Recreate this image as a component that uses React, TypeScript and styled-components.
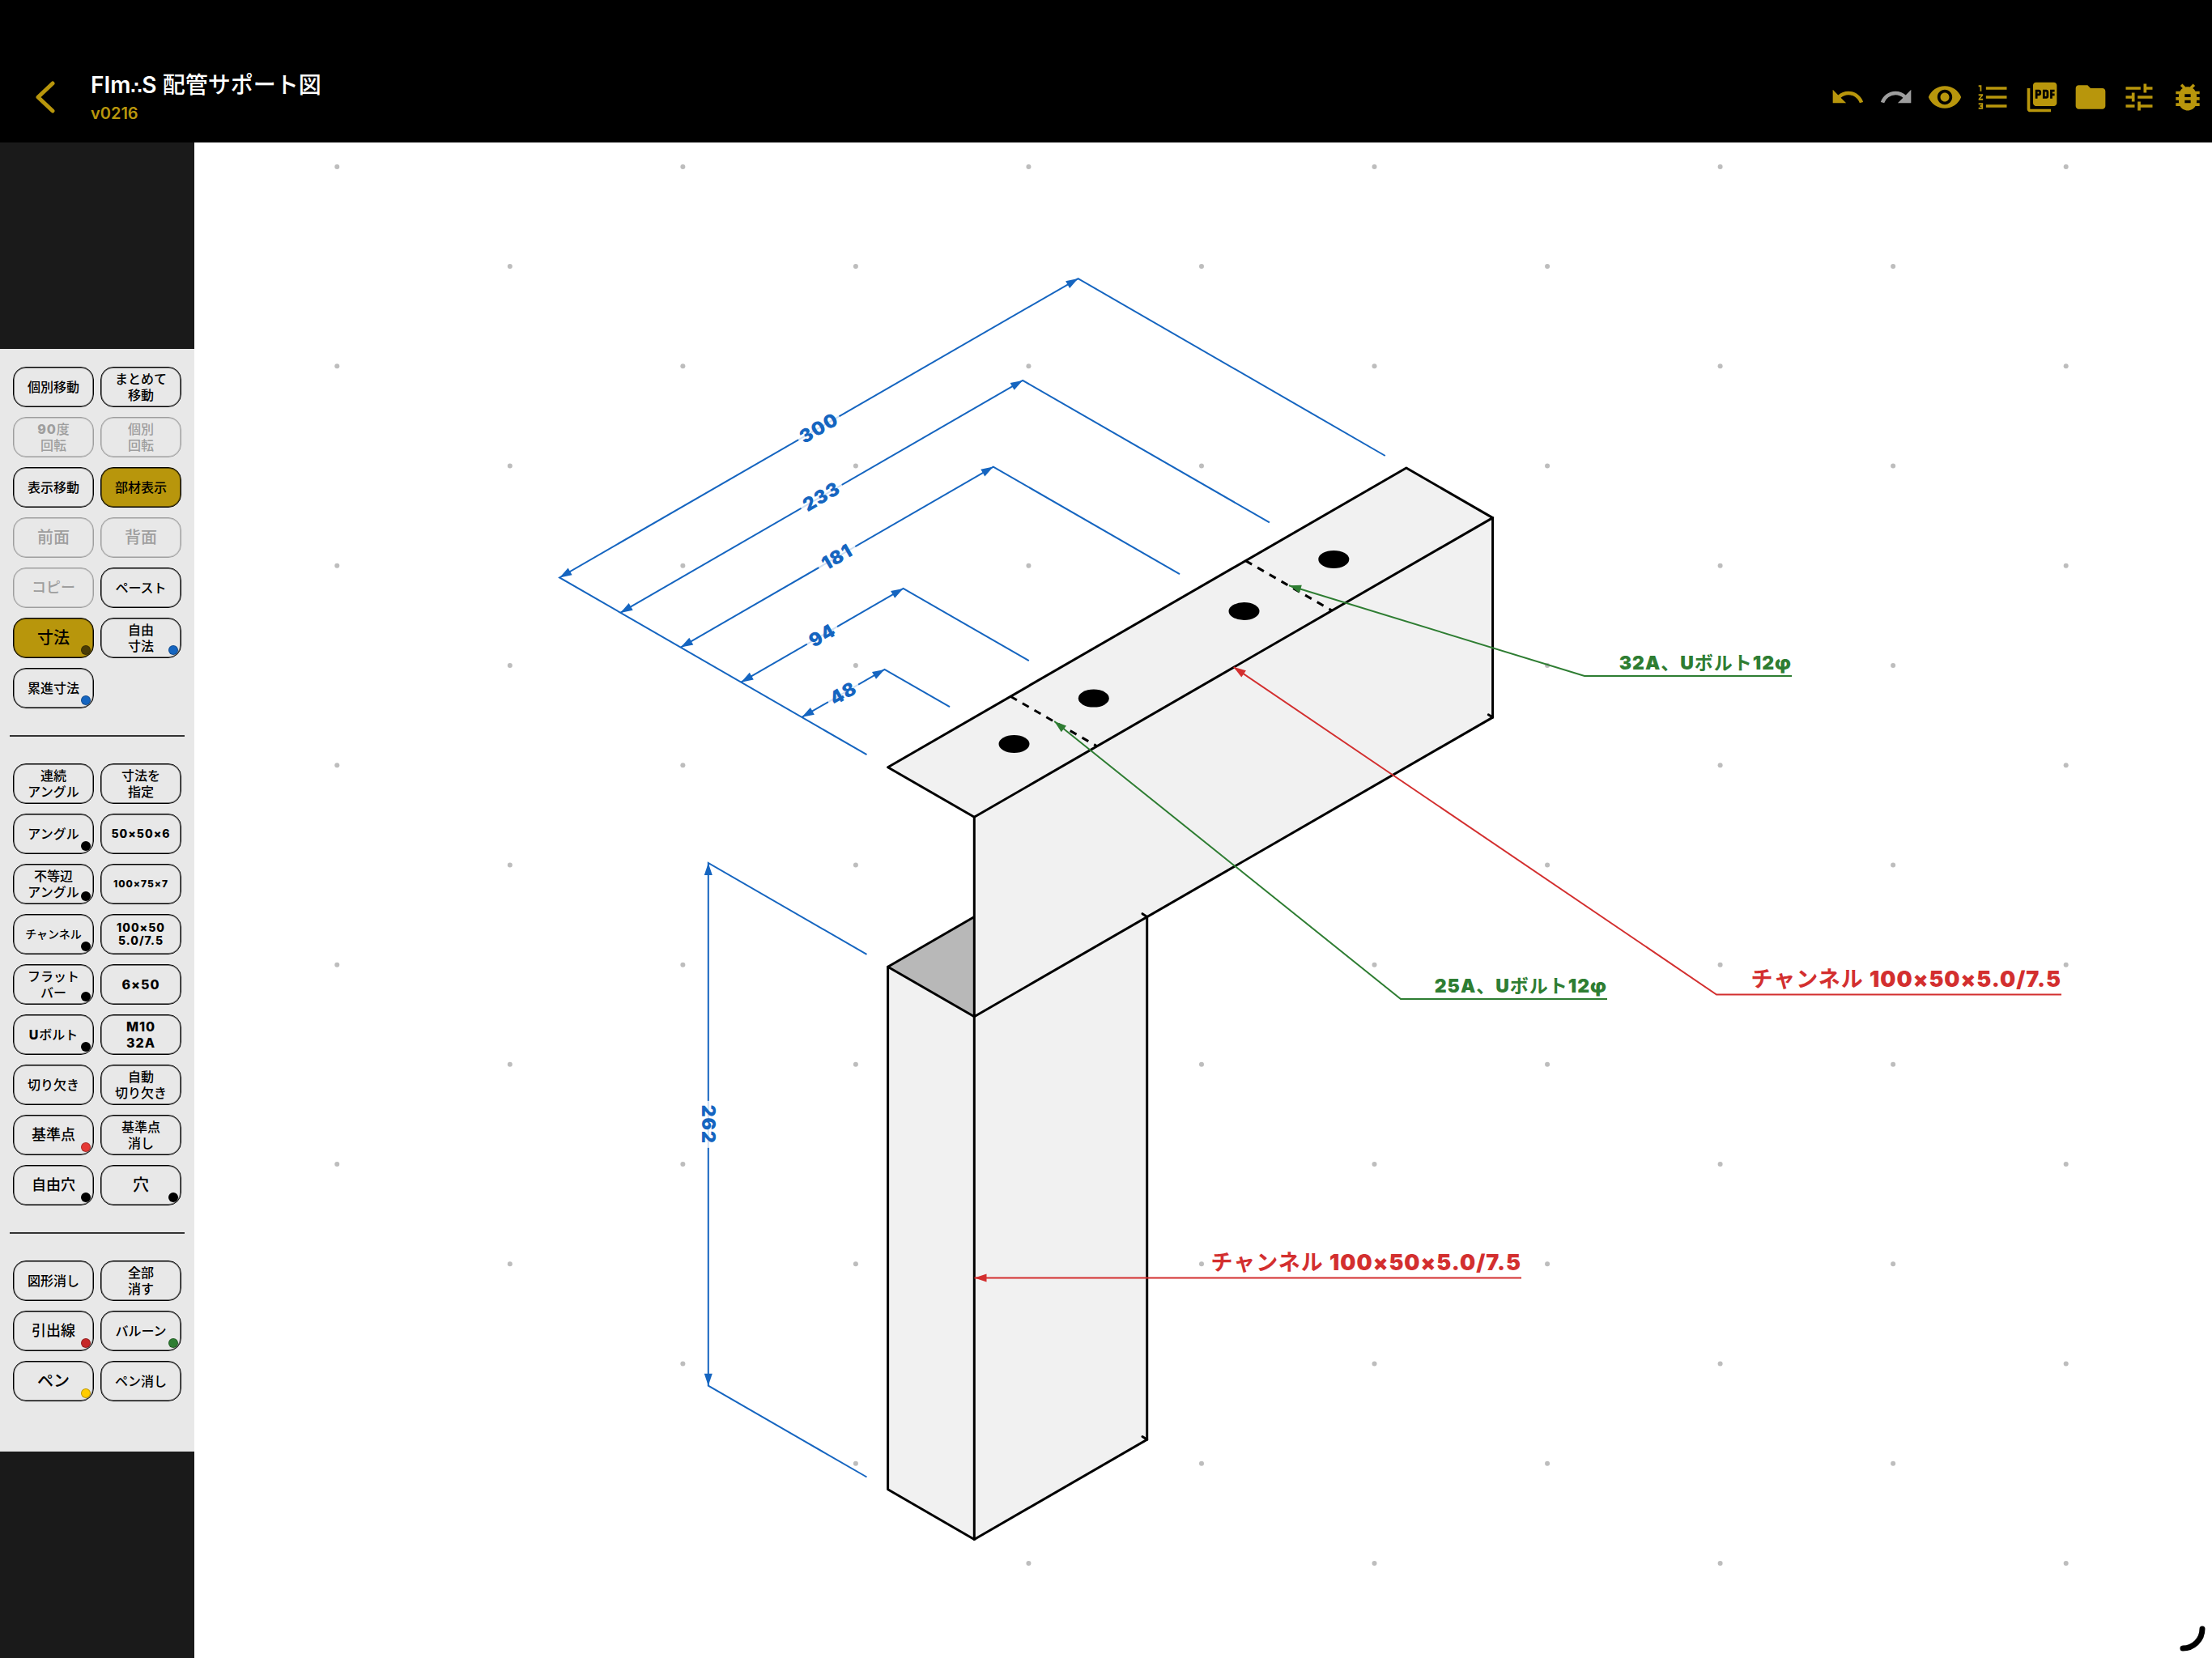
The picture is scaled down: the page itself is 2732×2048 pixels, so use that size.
import React from "react";
import styled, { createGlobalStyle } from "styled-components";
import {
  MdUndo,
  MdRedo,
  MdVisibility,
  MdFormatListNumbered,
  MdPictureAsPdf,
  MdFolder,
  MdTune,
  MdBugReport,
} from "react-icons/md";

const color = {
  gold: "#b8960c",
  ink: "#000000",
  panel: "#e8e8e8",
  rail: "#1a1a1a",
  disabled: "#9e9e9e",
  dimension: "#1565c0",
  balloon: "#2e7d32",
  leader: "#d32f2f",
  face: "#f1f1f1",
  inside: "#b8b8b8",
};

const fontStack = `Inter, "Noto Sans CJK JP", sans-serif`;

const GlobalStyle = createGlobalStyle`
  *, *::before, *::after { box-sizing: border-box; }
  body {
    margin: 0;
    background: #ffffff;
    font-family: ${fontStack};
  }
`;

const Page = styled.div`
  display: flex;
  flex-direction: column;
  min-height: 100vh;
`;

const Header = styled.header`
  display: flex;
  align-items: flex-end;
  height: 176px;
  padding-bottom: 22px;
  background: ${color.ink};
`;

const BackButton = styled.button`
  display: flex;
  align-items: center;
  justify-content: center;
  width: 112px;
  height: 68px;
  padding: 0;
  border: 0;
  background: none;
  color: ${color.gold};
`;

const Heading = styled.div`
  display: flex;
  flex-direction: column;
  flex: 1;
`;

const Title = styled.h1`
  margin: 0;
  color: #ffffff;
  font-size: 28px;
  font-weight: 600;
  line-height: 36px;
`;

const Therefore = styled.span`
  font-family: "DejaVu Sans", sans-serif;
  font-size: 20px;
  font-weight: 700;
`;

const Version = styled.span`
  color: ${color.gold};
  font-size: 20px;
  font-weight: 600;
  line-height: 28px;
`;

const Toolbar = styled.nav`
  display: flex;
`;

const IconButton = styled.button`
  display: flex;
  align-items: center;
  justify-content: center;
  width: 60px;
  height: 68px;
  padding: 0;
  border: 0;
  background: none;
  color: ${color.gold};
  font-size: 44px;

  &:disabled {
    color: ${color.disabled};
  }
`;

const Workspace = styled.main`
  display: flex;
  flex: 1;
`;

const Rail = styled.aside`
  display: flex;
  flex-direction: column;
  justify-content: center;
  flex: none;
  width: 240px;
  background: ${color.rail};
`;

const Panel = styled.div`
  display: flex;
  flex-direction: column;
  gap: 33px;
  padding: 22px 12px 62px;
  background: ${color.panel};
`;

const Divider = styled.hr`
  width: 100%;
  height: 2px;
  margin: 0;
  border: 0;
  background: #333333;
`;

const ButtonGrid = styled.div`
  display: grid;
  grid-template-columns: 1fr 1fr;
  gap: 12px 8px;
  padding: 0 4px;
`;

type Size = "xs" | "sm" | "code" | "md" | "lg" | "xl";

const textSize: Record<Size, string> = {
  xs: "font-size: 12px; line-height: 16px;",
  sm: "font-size: 14px; line-height: 20px;",
  code: "font-size: 14px; line-height: 16px;",
  md: "font-size: 16px; line-height: 20px;",
  lg: "font-size: 18px; line-height: 20px;",
  xl: "font-size: 20px; line-height: 24px;",
};

const ToolButton = styled.button<{ $size: Size; $active?: boolean }>`
  position: relative;
  display: flex;
  align-items: center;
  justify-content: center;
  height: 50px;
  padding: 0;
  border: 1px solid ${color.ink};
  border-radius: 16px;
  box-shadow: inset 0 0 0 1px rgba(0, 0, 0, 0.5);
  background: ${(p) => (p.$active ? color.gold : "transparent")};
  color: ${color.ink};
  font-family: inherit;
  font-weight: 800;
  letter-spacing: 1px;
  white-space: pre-line;
  text-align: center;
  ${(p) => textSize[p.$size]}

  &:disabled {
    border-color: ${color.disabled};
    box-shadow: inset 0 0 0 1px rgba(158, 158, 158, 0.5);
    color: ${color.disabled};
  }
`;

const JapaneseText = styled.span`
  font-weight: 500;
  letter-spacing: 0;
`;

const ColorDot = styled.span<{ $color: string }>`
  position: absolute;
  right: 3px;
  bottom: 3px;
  width: 12px;
  height: 12px;
  border: 1px solid rgba(0, 0, 0, 0.25);
  border-radius: 50%;
  background: ${(p) => p.$color};
`;

const Canvas = styled.section`
  flex: 1;
  min-width: 0;
  background: #ffffff;
`;

const Drawing = styled.svg`
  display: block;
  width: 100%;
`;

const GridDot = styled.circle`
  fill: #bdbdbd;
`;

const Face = styled.polygon<{ $inside?: boolean }>`
  fill: ${(p) => (p.$inside ? color.inside : color.face)};
`;

const Edge = styled.polyline<{ $dashed?: boolean }>`
  fill: none;
  stroke: ${color.ink};
  stroke-width: 3px;
  stroke-dasharray: ${(p) => (p.$dashed ? "9 8" : "none")};
  stroke-linejoin: round;
  stroke-linecap: ${(p) => (p.$dashed ? "butt" : "round")};
`;

const ThinLine = styled.polyline<{ $color: string }>`
  fill: none;
  stroke: ${(p) => p.$color};
  stroke-width: 2px;
`;

const Knockout = styled.rect`
  fill: #ffffff;
  fill-opacity: 0.8;
`;

const DimensionText = styled.text`
  fill: ${color.dimension};
  font-family: ${fontStack};
  font-size: 23px;
  font-weight: 900;
  letter-spacing: 1px;
  text-anchor: middle;
`;

const LabelText = styled.text<{ $color: string; $large?: boolean }>`
  fill: ${(p) => p.$color};
  font-family: ${fontStack};
  font-size: ${(p) => (p.$large ? 27 : 23)}px;
  font-weight: 900;
  letter-spacing: 1px;
  text-anchor: end;
`;

const LabelJapanese = styled.tspan`
  font-weight: 700;
`;

type Tool = {
  label: string;
  size?: Size;
  dot?: string;
  active?: boolean;
  disabled?: boolean;
};

const moveTools: Tool[] = [
  { label: "個別移動" },
  { label: "まとめて\n移動" },
  { label: "90度\n回転", disabled: true },
  { label: "個別\n回転", disabled: true },
  { label: "表示移動" },
  { label: "部材表示", active: true },
  { label: "前面", size: "xl", disabled: true },
  { label: "背面", size: "xl", disabled: true },
  { label: "コピー", size: "lg", disabled: true },
  { label: "ペースト" },
  { label: "寸法", size: "xl", active: true, dot: "#4a3c05" },
  { label: "自由\n寸法", dot: "#1565c0" },
  { label: "累進寸法", dot: "#1565c0" },
];

const partTools: Tool[] = [
  { label: "連続\nアングル" },
  { label: "寸法を\n指定" },
  { label: "アングル", dot: "#000000" },
  { label: "50×50×6", size: "code" },
  { label: "不等辺\nアングル", dot: "#000000" },
  { label: "100×75×7", size: "xs" },
  { label: "チャンネル", size: "sm", dot: "#000000" },
  { label: "100×50\n5.0/7.5", size: "code" },
  { label: "フラット\nバー", dot: "#000000" },
  { label: "6×50" },
  { label: "Uボルト", dot: "#000000" },
  { label: "M10\n32A" },
  { label: "切り欠き" },
  { label: "自動\n切り欠き" },
  { label: "基準点", size: "lg", dot: "#e53935" },
  { label: "基準点\n消し" },
  { label: "自由穴", size: "lg", dot: "#000000" },
  { label: "穴", size: "xl", dot: "#000000" },
];

const editTools: Tool[] = [
  { label: "図形消し" },
  { label: "全部\n消す" },
  { label: "引出線", size: "lg", dot: "#c62828" },
  { label: "バルーン", dot: "#2e7d32" },
  { label: "ペン", size: "xl", dot: "#ffcc00" },
  { label: "ペン消し" },
];

const splitScripts = (text: string) =>
  text.match(/[\x21-\x7e×φ]+|[^\x21-\x7e×φ]+/g) ?? [];
const isLatin = (part: string) => /[\x21-\x7e×φ]/.test(part);

function ToolGroup({ tools }: { tools: Tool[] }) {
  return (
    <ButtonGrid>
      {tools.map((tool) => (
        <ToolButton
          key={tool.label}
          type="button"
          $size={tool.size ?? "md"}
          $active={tool.active}
          disabled={tool.disabled}
        >
          <span>
            {splitScripts(tool.label).map((part, i) =>
              isLatin(part) ? part : <JapaneseText key={i}>{part}</JapaneseText>
            )}
          </span>
          {tool.dot && <ColorDot $color={tool.dot} />}
        </ToolButton>
      ))}
    </ButtonGrid>
  );
}

type Point = [number, number];

/* Isometric projection: millimetres along the beam, across it and down. */
const scale = 2.4645;
const cos30 = Math.cos(Math.PI / 6);
const origin: Point = [1096.6, 947.7];
const iso = (along: number, across: number, down: number): Point => [
  origin[0] + (along + across) * cos30 * scale,
  origin[1] + (across - along) * 0.5 * scale + down * scale,
];
const pts = (...list: Point[]) =>
  list.map(([x, y]) => `${x.toFixed(1)},${y.toFixed(1)}`).join(" ");

function Arrow({ tip, from, fill }: { tip: Point; from: Point; fill: string }) {
  const angle = Math.atan2(tip[1] - from[1], tip[0] - from[0]);
  return (
    <polygon
      points="0,0 -15,-5 -15,5"
      fill={fill}
      transform={`translate(${tip[0]} ${tip[1]}) rotate(${(angle * 180) / Math.PI})`}
    />
  );
}

type DimensionProps = {
  value: number;
  start: Point;
  end: Point;
  startExt?: Point;
  endExt: Point;
  angle: number;
};

function Dimension({ value, start, end, startExt, endExt, angle }: DimensionProps) {
  const width = value === 181 ? 52 : value < 100 ? 43 : 58;
  const mid: Point = [(start[0] + end[0]) / 2, (start[1] + end[1]) / 2];
  return (
    <g>
      <ThinLine
        $color={color.dimension}
        points={pts(...(startExt ? [startExt] : []), start, end, endExt)}
      />
      <Arrow tip={start} from={end} fill={color.dimension} />
      <Arrow tip={end} from={start} fill={color.dimension} />
      <g transform={`translate(${mid[0]} ${mid[1]}) rotate(${angle})`}>
        <Knockout x={-width / 2} y={-14} width={width} height={28} />
        <DimensionText y={8}>{value}</DimensionText>
      </g>
    </g>
  );
}

type CalloutProps = {
  text: string;
  tip: Point;
  elbow: Point;
  end: number;
  stroke: string;
  large?: boolean;
};

function Callout({ text, tip, elbow, end, stroke, large }: CalloutProps) {
  return (
    <g>
      <ThinLine $color={stroke} points={pts(tip, elbow, [end, elbow[1]])} />
      <Arrow tip={tip} from={elbow} fill={stroke} />
      <LabelText $color={stroke} $large={large} x={end} y={elbow[1] - (large ? 10 : 8)}>
        {splitScripts(text).map((part, i) =>
          isLatin(part) ? part : <LabelJapanese key={i}>{part}</LabelJapanese>
        )}
      </LabelText>
    </g>
  );
}

const gridDots: Point[] = [];
for (let row = -1; row <= 13; row++) {
  for (let col = -3; col <= 7; col++) {
    if ((row + col) % 2 === 0 && row - col <= 12) {
      gridDots.push([1056.9 + col * 213.54, 329.1 + row * 123.22]);
    }
  }
}

const holes: Point[] = [
  [1252.5, 919],
  [1350.8, 862.6],
  [1536.5, 755],
  [1647.3, 690.9],
];

function Sheet() {
  return (
    <Drawing viewBox="240 176 2492 1872" preserveAspectRatio="xMinYMin meet" role="img" aria-label="配管サポート図">
      {gridDots.map(([x, y]) => (
        <GridDot key={`${x}-${y}`} cx={x} cy={y} r={3} />
      ))}

      <Face $inside points={pts(iso(0, 0, 100), iso(50, 0, 100), iso(0, 50, 100))} />
      <Face points={pts(iso(0, 0, 100), iso(0, 50, 100), iso(0, 50, 362), iso(0, 0, 362))} />
      <Face points={pts(iso(0, 50, 100), iso(100, 50, 100), iso(100, 50, 362), iso(0, 50, 362))} />
      <Edge points={pts(iso(50, 0, 100), iso(0, 0, 100), iso(0, 50, 100))} />
      <Edge
        points={pts(iso(0, 0, 100), iso(0, 0, 362), iso(0, 50, 362), iso(100, 50, 362), iso(100, 50, 100))}
      />
      <Edge points={pts(iso(0, 50, 100), iso(0, 50, 362))} />
      <Edge points={pts([1411, 1774.6], iso(100, 50, 362))} />

      <Face points={pts(iso(0, 0, 0), iso(300, 0, 0), iso(300, 50, 0), iso(0, 50, 0))} />
      <Face points={pts(iso(0, 50, 0), iso(300, 50, 0), iso(300, 50, 100), iso(0, 50, 100))} />
      <Edge points={pts(iso(0, 50, 0), iso(0, 0, 0), iso(300, 0, 0), iso(300, 50, 0), iso(0, 50, 0))} />
      <Edge points={pts(iso(0, 50, 0), iso(0, 50, 100), iso(300, 50, 100), iso(300, 50, 0))} />
      <Edge points={pts([1411, 1128.7], iso(100, 50, 100))} />
      <Edge points={pts([1838.3, 882.8], iso(300, 50, 100))} />
      <Edge $dashed points={pts(iso(71, 0, 0), iso(71, 50, 0))} />
      <Edge $dashed points={pts(iso(207, 0, 0), iso(207, 50, 0))} />
      {holes.map(([x, y]) => (
        <ellipse key={x} cx={x} cy={y} rx={19} ry={11} />
      ))}

      <Dimension value={300} start={[691.1, 713.4]} end={[1331.6, 344.1]} startExt={[1070.5, 932.2]} endExt={[1710.8, 563]} angle={-30} />
      <Dimension value={233} start={[766.2, 756.9]} end={[1263.1, 469.9]} endExt={[1567.9, 645.4]} angle={-30} />
      <Dimension value={181} start={[840.8, 799.6]} end={[1226.8, 576.6]} endExt={[1457, 709.2]} angle={-30} />
      <Dimension value={94} start={[915.3, 842.7]} end={[1115.6, 726.9]} endExt={[1270.8, 816.2]} angle={-30} />
      <Dimension value={48} start={[990.4, 885.8]} end={[1092.5, 826.9]} endExt={[1173, 873.2]} angle={-30} />
      <Dimension value={262} start={[874.8, 1066]} end={[874.8, 1711.7]} startExt={[1070.5, 1178.8]} endExt={[1070.5, 1824.5]} angle={90} />

      <Callout text="32A、Uボルト12φ" tip={[1592, 723.2]} elbow={[1957, 835]} end={2213} stroke={color.balloon} />
      <Callout text="25A、Uボルト12φ" tip={[1302.2, 891]} elbow={[1730, 1234]} end={1985} stroke={color.balloon} />
      <Callout large text="チャンネル 100×50×5.0/7.5" tip={[1523.7, 824]} elbow={[2120, 1228.5]} end={2546} stroke={color.leader} />
      <Callout large text="チャンネル 100×50×5.0/7.5" tip={[1203.5, 1578.5]} elbow={[1420, 1578.5]} end={1879} stroke={color.leader} />

      <path d="M2720 2012 A24 24 0 0 1 2696 2036" fill="none" stroke="#000000" strokeWidth="7" strokeLinecap="round" />
    </Drawing>
  );
}

export default function App() {
  return (
    <Page>
      <GlobalStyle />
      <Header>
        <BackButton type="button" aria-label="戻る">
          <svg width="24" height="40" viewBox="0 0 24 40" fill="none" stroke="currentColor" strokeWidth="5" strokeLinecap="round" strokeLinejoin="round">
            <path d="M21 3 L3 20 L21 37" />
          </svg>
        </BackButton>
        <Heading>
          <Title>
            FIm<Therefore>∴</Therefore>S <JapaneseText>配管サポート図</JapaneseText>
          </Title>
          <Version>v0216</Version>
        </Heading>
        <Toolbar aria-label="ツール">
          <IconButton type="button" aria-label="元に戻す"><MdUndo /></IconButton>
          <IconButton type="button" aria-label="やり直す" disabled><MdRedo /></IconButton>
          <IconButton type="button" aria-label="表示"><MdVisibility /></IconButton>
          <IconButton type="button" aria-label="部材リスト"><MdFormatListNumbered /></IconButton>
          <IconButton type="button" aria-label="PDF"><MdPictureAsPdf /></IconButton>
          <IconButton type="button" aria-label="フォルダ"><MdFolder /></IconButton>
          <IconButton type="button" aria-label="設定"><MdTune /></IconButton>
          <IconButton type="button" aria-label="不具合報告"><MdBugReport /></IconButton>
        </Toolbar>
      </Header>
      <Workspace>
        <Rail>
          <Panel>
            <ToolGroup tools={moveTools} />
            <Divider />
            <ToolGroup tools={partTools} />
            <Divider />
            <ToolGroup tools={editTools} />
          </Panel>
        </Rail>
        <Canvas>
          <Sheet />
        </Canvas>
      </Workspace>
    </Page>
  );
}
